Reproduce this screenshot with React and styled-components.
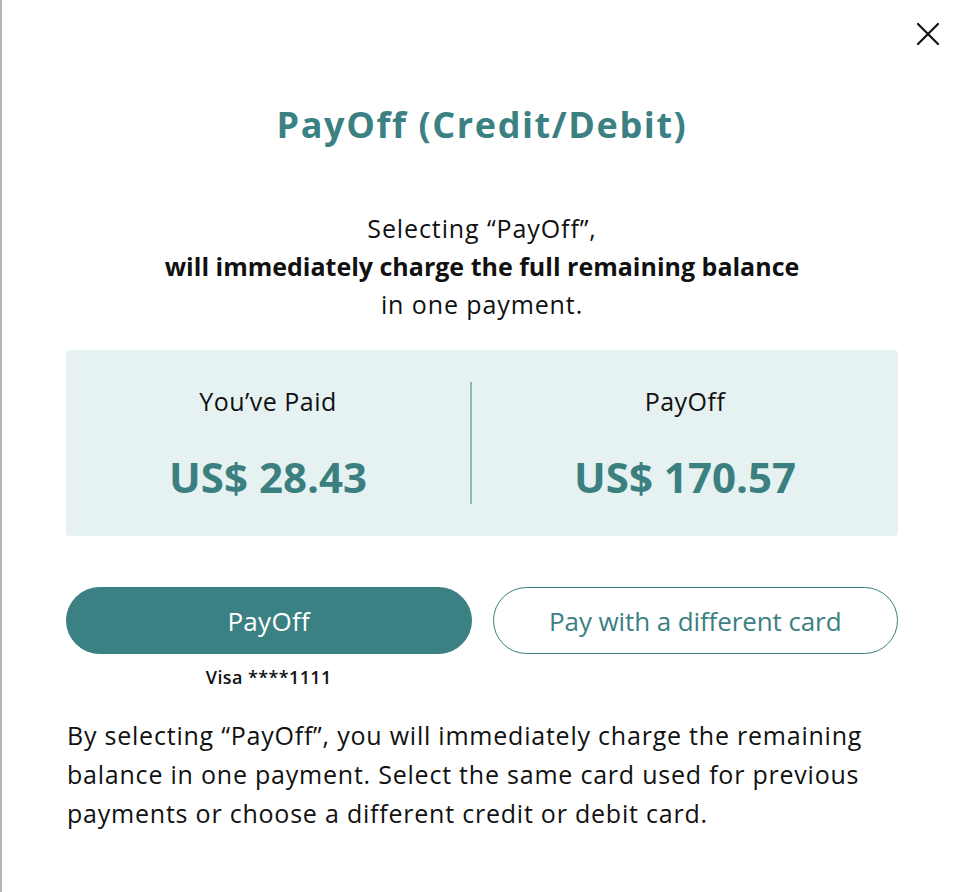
import React from 'react';
import styled, { createGlobalStyle } from 'styled-components';

const GlobalStyle = createGlobalStyle`
  html, body {
    margin: 0;
    padding: 0;
    background: #ffffff;
  }
  body {
    font-family: "Open Sans", "Noto Sans", sans-serif;
    color: #111111;
  }
`;

const Modal = styled.div`
  position: relative;
  box-sizing: border-box;
  width: 960px;
  height: 892px;
  background: #ffffff;
  border-left: 2px solid #b4b4b4;
  padding: 100px 62px 0 64px;
  display: flex;
  flex-direction: column;
`;

const CloseButton = styled.button`
  position: absolute;
  top: 18px;
  right: 16px;
  width: 32px;
  height: 32px;
  padding: 0;
  border: none;
  background: transparent;
  display: flex;
  align-items: center;
  justify-content: center;
  cursor: pointer;
`;

const Title = styled.h1`
  margin: 0;
  text-align: center;
  font-size: 36px;
  line-height: 50px;
  font-weight: 700;
  letter-spacing: 1.6px;
  color: #3b8082;
`;

const Lead = styled.p`
  margin: 59px 0 0;
  text-align: center;
  font-size: 25px;
  line-height: 38px;
  font-weight: 500;
  letter-spacing: 0.9px;
  color: #111111;

  strong {
    font-weight: 700;
    letter-spacing: 0;
  }
`;

const Summary = styled.div`
  margin-top: 27px;
  height: 186px;
  background: #e6f2f1;
  border-radius: 4px;
  display: grid;
  grid-template-columns: 404px 2px 1fr;
  align-items: center;
`;

const Divider = styled.div`
  width: 2px;
  height: 122px;
  background: #7cc0bf;
`;

const Stat = styled.div`
  display: flex;
  flex-direction: column;
  align-items: center;
  gap: 36px;
`;

const StatLabel = styled.span`
  font-size: 25px;
  line-height: 32px;
  font-weight: 500;
  letter-spacing: 0.5px;
  color: #111111;
`;

const StatValue = styled.span`
  font-size: 42px;
  line-height: 48px;
  font-weight: 700;
  letter-spacing: 0;
  color: #3b7f80;
`;

const Actions = styled.div`
  margin-top: 51px;
  display: grid;
  grid-template-columns: 1fr 1fr;
  column-gap: 21px;
`;

const ActionColumn = styled.div`
  display: flex;
  flex-direction: column;
  align-items: center;
  gap: 11px;
`;

const PillButton = styled.button`
  box-sizing: border-box;
  width: 100%;
  height: 67px;
  border-radius: 34px;
  font-family: inherit;
  font-size: 26px;
  font-weight: 500;
  letter-spacing: ${p => (p.$primary ? '0.3px' : '-0.1px')};
  cursor: pointer;
  border: 1.6px solid #3b8082;
  background: ${p => (p.$primary ? '#3b8082' : '#ffffff')};
  color: ${p => (p.$primary ? '#ffffff' : '#3b8082')};
`;

const CardNote = styled.span`
  font-size: 18px;
  line-height: 24px;
  font-weight: 600;
  letter-spacing: 0.4px;
  color: #111111;
`;

const Disclaimer = styled.p`
  margin: 27px 0 0 1px;
  font-size: 25px;
  line-height: 39px;
  font-weight: 500;
  letter-spacing: 0.78px;
  color: #111111;
`;

function CloseIcon() {
  return (
    <svg width="24" height="24" viewBox="0 0 24 24" fill="none">
      <path d="M2 2 L22 22 M22 2 L2 22" stroke="#111" strokeWidth="2.2" strokeLinecap="round" />
    </svg>
  );
}

export default function App() {
  return (
    <>
      <GlobalStyle />
      <Modal>
        <CloseButton aria-label="Close">
          <CloseIcon />
        </CloseButton>
        <Title>PayOff (Credit/Debit)</Title>
        <Lead>
          Selecting “PayOff”,
          <br />
          <strong>will immediately charge the full remaining balance</strong>
          <br />
          in one payment.
        </Lead>
        <Summary>
          <Stat>
            <StatLabel>You’ve Paid</StatLabel>
            <StatValue>US$ 28.43</StatValue>
          </Stat>
          <Divider />
          <Stat>
            <StatLabel>PayOff</StatLabel>
            <StatValue>US$ 170.57</StatValue>
          </Stat>
        </Summary>
        <Actions>
          <ActionColumn>
            <PillButton $primary>PayOff</PillButton>
            <CardNote>Visa ****1111</CardNote>
          </ActionColumn>
          <ActionColumn>
            <PillButton>Pay with a different card</PillButton>
          </ActionColumn>
        </Actions>
        <Disclaimer>
          By selecting “PayOff”, you will immediately charge the remaining balance in one payment. Select the same card used for previous payments or choose a different credit or debit card.
        </Disclaimer>
      </Modal>
    </>
  );
}
